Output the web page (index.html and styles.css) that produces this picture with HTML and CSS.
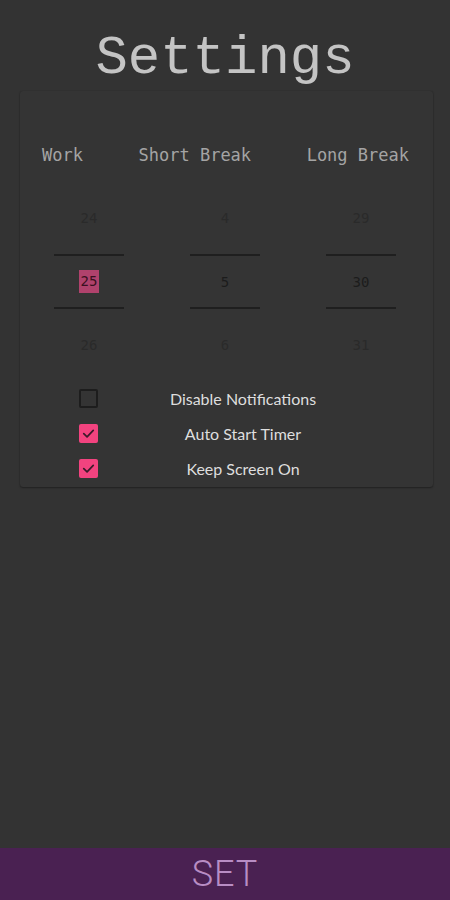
FILE: index.html
```html
<!DOCTYPE html>
<html>
<head>
<meta charset="utf-8">
<link rel="stylesheet" href="styles.css">
</head>
<body>
<div class="screen">
  <header class="title-bar"><h1 class="title">Settings</h1></header>
  <section class="card">
    <div class="headers">
      <span class="col-head">Work</span>
      <span class="col-head">Short Break</span>
      <span class="col-head">Long Break</span>
    </div>
    <div class="pickers">
      <div class="picker">
        <div class="p-item dim">24</div>
        <div class="p-item current"><span class="sel">25</span></div>
        <div class="p-item dim">26</div>
      </div>
      <div class="picker">
        <div class="p-item dim">4</div>
        <div class="p-item current">5</div>
        <div class="p-item dim">6</div>
      </div>
      <div class="picker">
        <div class="p-item dim">29</div>
        <div class="p-item current">30</div>
        <div class="p-item dim">31</div>
      </div>
    </div>
    <div class="options">
      <div class="opt">
        <span class="box"></span>
        <span class="opt-label">Disable Notifications</span>
      </div>
      <div class="opt">
        <span class="box checked"><svg viewBox="0 0 20 20" width="19" height="19"><path d="M5 10.2 L8.5 13.6 L15 6.8" fill="none" stroke="#3b1a2a" stroke-width="1.8" stroke-linecap="round" stroke-linejoin="round"/></svg></span>
        <span class="opt-label">Auto Start Timer</span>
      </div>
      <div class="opt">
        <span class="box checked"><svg viewBox="0 0 20 20" width="19" height="19"><path d="M5 10.2 L8.5 13.6 L15 6.8" fill="none" stroke="#3b1a2a" stroke-width="1.8" stroke-linecap="round" stroke-linejoin="round"/></svg></span>
        <span class="opt-label">Keep Screen On</span>
      </div>
    </div>
  </section>
  <div class="spacer"></div>
  <footer class="set-bar">SET</footer>
</div>
</body>
</html>
```

FILE: styles.css
```css
html, body {
  margin: 0;
  padding: 0;
  background: #333333;
}
.screen {
  width: 450px;
  height: 900px;
  display: flex;
  flex-direction: column;
  background: #333333;
  overflow: hidden;
}
.title-bar {
  height: 91px;
  box-sizing: border-box;
  padding-top: 29px;
  display: flex;
  justify-content: center;
}
.title {
  margin: 0;
  font-family: "Liberation Mono", monospace;
  font-weight: normal;
  font-size: 54px;
  line-height: 60px;
  color: #c4c4c4;
  letter-spacing: 0;
}
.card {
  margin: 0 17px 0 20px;
  background: #343434;
  border-radius: 3px;
  box-shadow: 0 1px 2px rgba(0,0,0,0.35), 0 0 1px rgba(0,0,0,0.25);
  padding: 54px 0 1px 0;
}
.headers {
  display: flex;
  justify-content: space-between;
  padding: 0 24px 0 22px;
}
.col-head {
  font-family: "DejaVu Sans Mono", monospace;
  font-size: 17px;
  line-height: 20px;
  color: #a4a4a4;
}
.pickers {
  display: grid;
  grid-template-columns: 136px 136px 136px;
  margin-top: 17px;
  padding-left: 1px;
}
.picker {
  display: flex;
  flex-direction: column;
  align-items: center;
}
.p-item {
  width: 70px;
  display: flex;
  align-items: center;
  justify-content: center;
  font-family: "DejaVu Sans Mono", monospace;
  font-size: 14px;
}
.p-item.dim {
  height: 72px;
  color: #2a2a2a;
}
.p-item.current {
  height: 51px;
  border-top: 2px solid #1f1f1f;
  border-bottom: 2px solid #1f1f1f;
  color: #1c1c1c;
}
.sel {
  background: #b0426c;
  color: #3a1020;
  padding: 3px 2px;
  line-height: 17px;
}
.options {
  display: flex;
  flex-direction: column;
}
.opt {
  height: 35px;
  display: grid;
  grid-template-columns: 137px 172px;
  align-items: center;
}
.box {
  justify-self: center;
  width: 19px;
  height: 19px;
  box-sizing: border-box;
  border: 2px solid #1d1d1d;
  border-radius: 2px;
  display: block;
}
.box.checked {
  background: #f2437f;
  border: none;
}
.box svg {
  display: block;
}
.opt-label {
  text-align: center;
  font-family: "Lato", "Noto Sans", sans-serif;
  font-size: 16px;
  color: #dedede;
  white-space: nowrap;
}
.spacer {
  flex: 1;
}
.set-bar {
  height: 52px;
  background: #4a2152;
  display: flex;
  align-items: center;
  justify-content: center;
  font-family: "Roboto", "Liberation Sans", sans-serif;
  font-weight: 300;
  font-size: 36px;
  color: #b88dc4;
  letter-spacing: 1px;
}
```
